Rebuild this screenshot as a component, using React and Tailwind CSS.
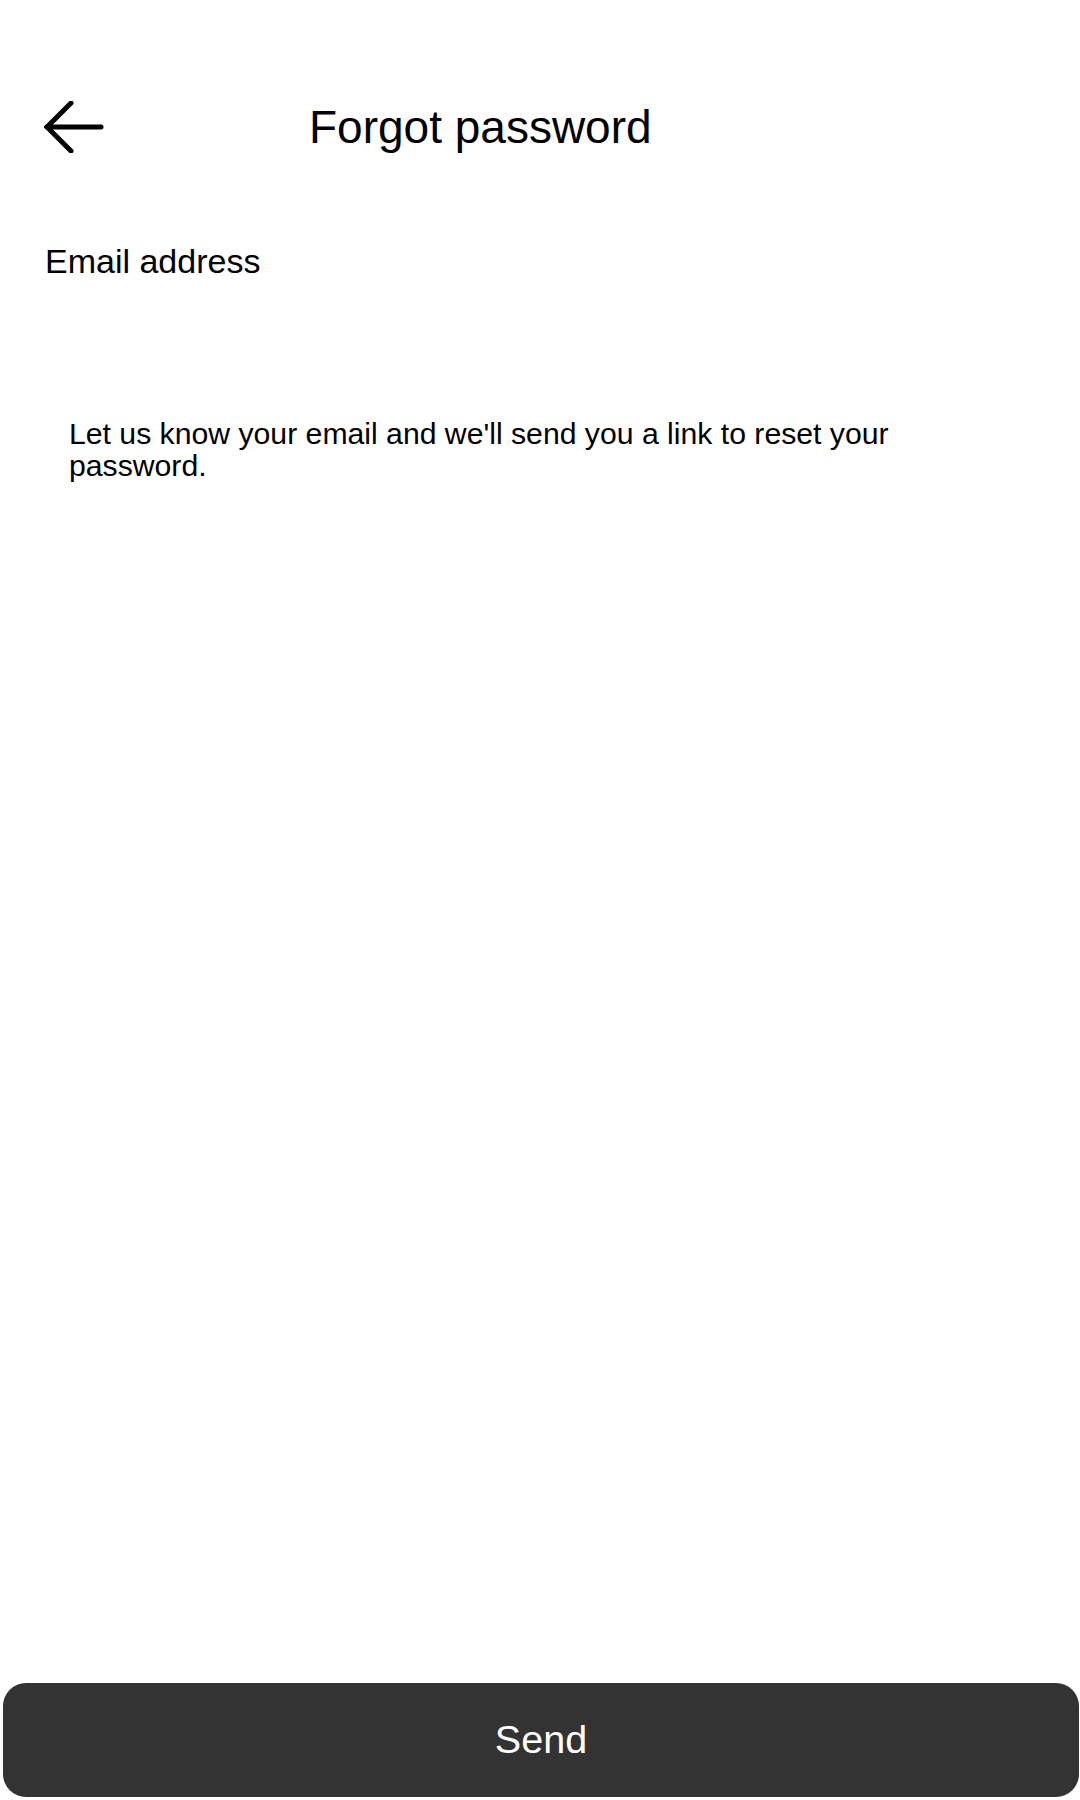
import React from 'react';

const BackArrow = () => (
    <svg width="60" height="52" viewBox="0 0 60 52" fill="none" stroke="currentColor" strokeWidth="5" strokeLinecap="round" strokeLinejoin="miter">
        <path d="M3 26 H57" />
        <path d="M27 2 L3 26 L27 50" />
    </svg>
);

const App = () => {
    return (
        <div className="w-[1080px] h-[1800px] bg-white text-black flex flex-col font-['Liberation_Sans',Arial,sans-serif]">
            {/* Header */}
            <div className="flex items-center h-[60px] mt-[97px] pl-[44px]">
                <button className="text-black">
                    <BackArrow />
                </button>
                <h1 className="ml-[205px] text-[46px] leading-none font-normal">Forgot password</h1>
            </div>

            {/* Form */}
            <label className="mt-[85px] pl-[45px] text-[34px] leading-[39px]">Email address</label>

            <p className="mt-[137px] pl-[69px] pr-[69px] text-[30.2px] leading-[32px]">
                Let us know your email and we'll send you a link to reset your password.
            </p>

            {/* Submit */}
            <button className="mt-auto ml-[3px] mr-[1px] mb-[3px] h-[114px] rounded-[23px] bg-[#333333] text-white text-[39.5px]">
                Send
            </button>
        </div>
    );
};

export default App;
